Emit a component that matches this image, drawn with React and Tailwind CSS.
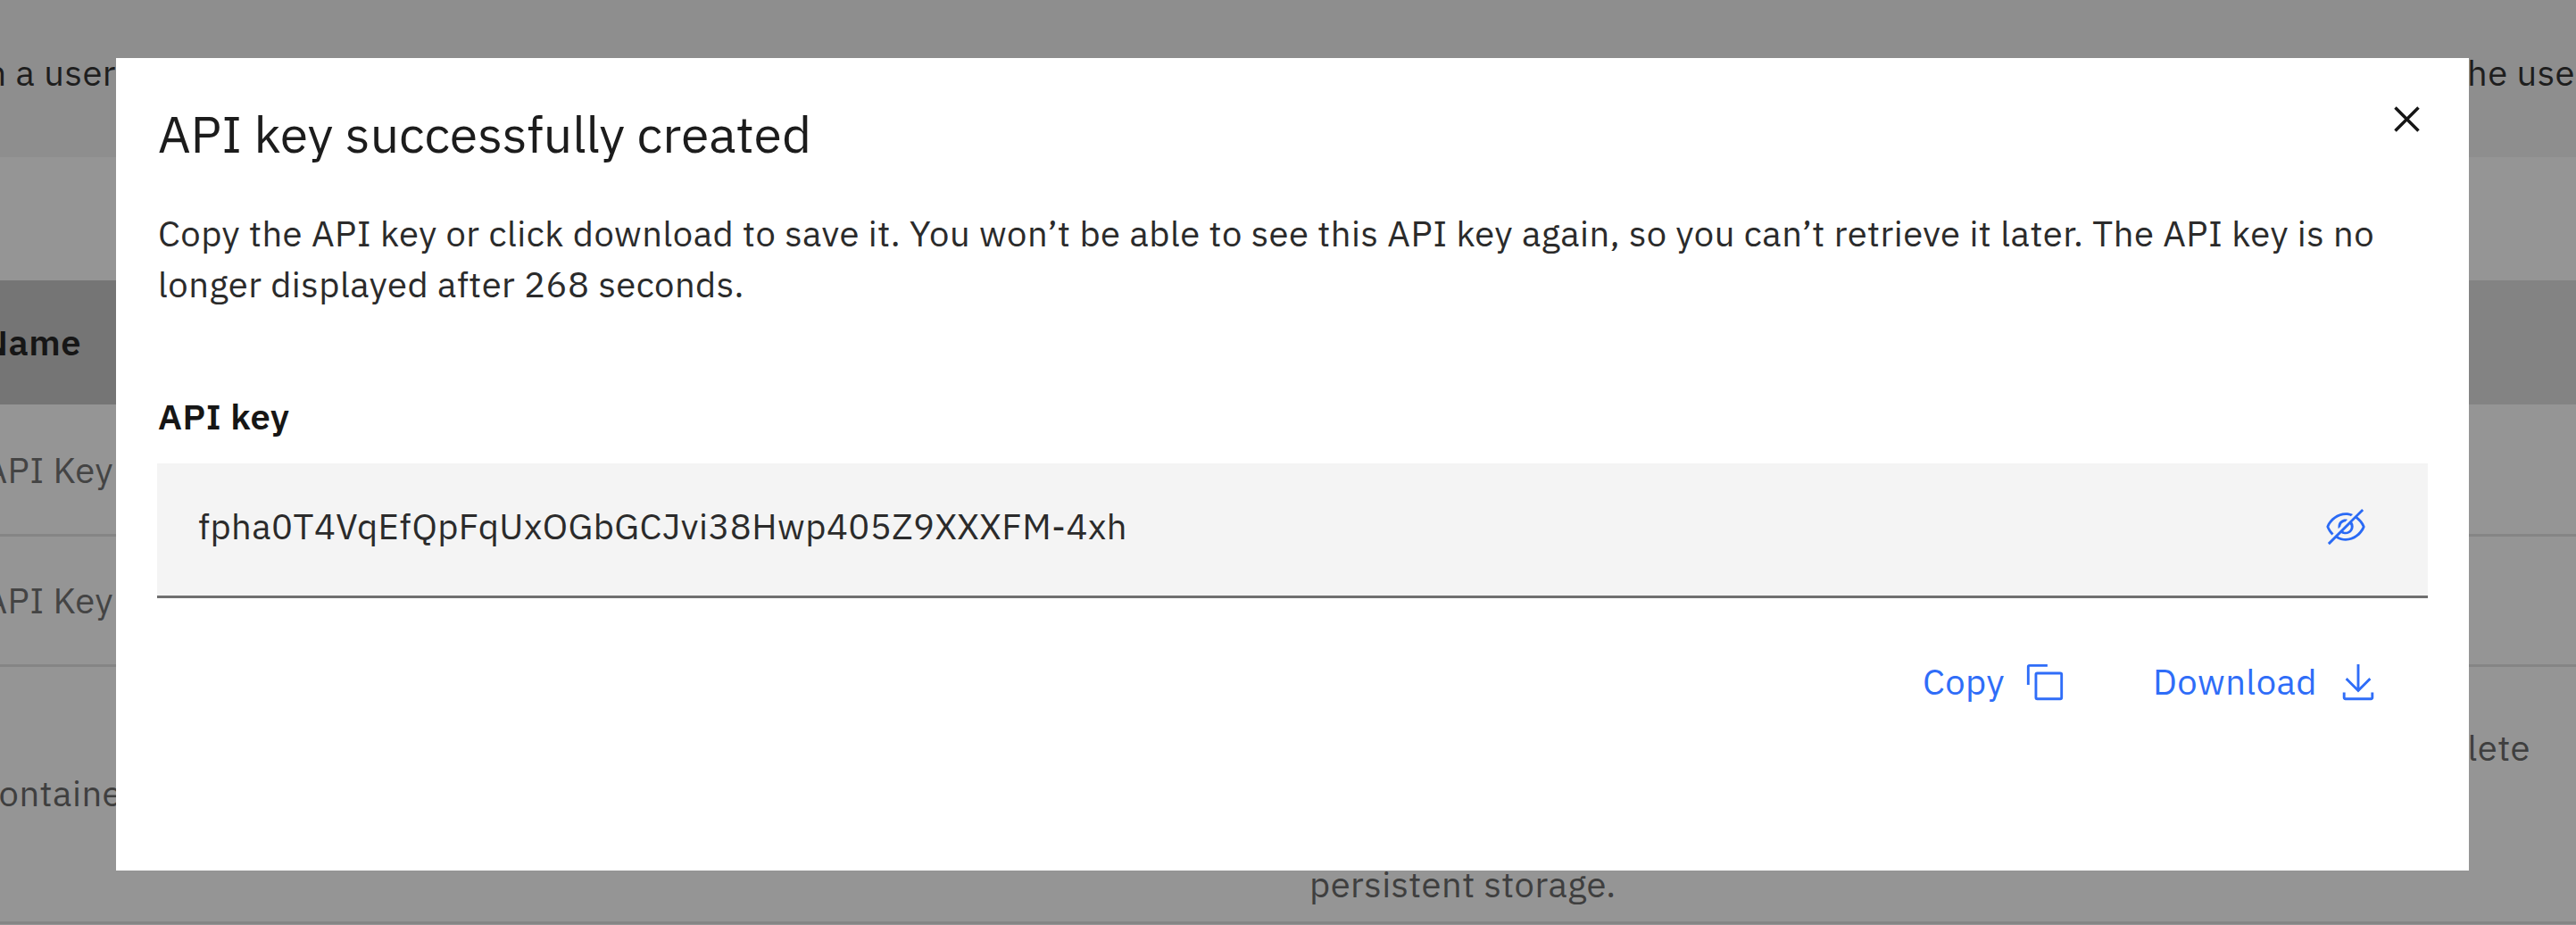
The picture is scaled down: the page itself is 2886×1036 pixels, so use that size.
const EyeOff = () => (
  <svg viewBox="0 0 16 16" fill="currentColor" className="size-[46px]">
    <path d="M2.6,11.3l0.7-0.7C2.6,9.8,1.9,9,1.5,8c1-2.5,3.8-4.5,6.5-4.5c0.7,0,1.4,0.1,2,0.4l0.8-0.8C9.9,2.7,9,2.5,8,2.5C4.7,2.6,1.7,4.7,0.5,7.8c0,0.1,0,0.2,0,0.3C1,9.3,1.7,10.4,2.6,11.3z" />
    <path d="M6,7.9c0.1-1,0.9-1.8,1.8-1.8l0.9-0.9C7.2,4.7,5.5,5.6,5.1,7.2C5,7.7,5,8.3,5.1,8.8L6,7.9z" />
    <path d="M15.5,7.8c-0.6-1.5-1.6-2.8-2.9-3.7L15,1.7L14.3,1L1,14.3L1.7,15l2.6-2.6c1.1,0.7,2.4,1,3.7,1.1c3.3-0.1,6.3-2.2,7.5-5.3C15.5,8.1,15.5,7.9,15.5,7.8z M10,8c0,1.1-0.9,2-2,2c-0.3,0-0.7-0.1-1-0.3L9.7,7C9.9,7.3,10,7.6,10,8z M8,12.5c-1,0-2.1-0.3-3-0.8l1.3-1.3c1.4,0.9,3.2,0.6,4.2-0.8c0.7-1,0.7-2.4,0-3.4l1.4-1.4c1.1,0.8,2,1.9,2.6,3.2C13.4,10.5,10.7,12.5,8,12.5z" />
  </svg>
);

const CopyIcon = () => (
  <svg viewBox="0 0 32 32" fill="currentColor" className="size-[46px]">
    <path d="M28,10V28H10V10H28m0-2H10a2,2,0,0,0-2,2V28a2,2,0,0,0,2,2H28a2,2,0,0,0,2-2V10a2,2,0,0,0-2-2Z" />
    <path d="M4,18H2V4A2,2,0,0,1,4,2H18V4H4Z" />
  </svg>
);

const DownloadIcon = () => (
  <svg viewBox="0 0 16 16" fill="currentColor" className="size-[46px]">
    <path d="M13 7L12.3 6.3 8.5 10.1 8.5 1 7.5 1 7.5 10.1 3.7 6.3 3 7 8 12z" />
    <path d="M13 12v2H3v-2H2v2c0 .6.4 1 1 1h10c.6 0 1-.4 1-1v-2H13z" />
  </svg>
);

const CloseIcon = () => (
  <svg viewBox="0 0 32 32" fill="currentColor" className="size-[57px]">
    <path d="M24 9.4L22.6 8 16 14.6 9.4 8 8 9.4 14.6 16 8 22.6 9.4 24 16 17.4 22.6 24 24 22.6 17.4 16 24 9.4z" />
  </svg>
);

function KeyRow({ height }) {
  return (
    <div className={`flex items-center border-b-3 border-[#858585] ${height}`}>
      <div className="flex w-[127px] justify-end text-[#444444]">API Key</div>
    </div>
  );
}

function Backdrop() {
  return (
    <div className="flex h-full flex-col whitespace-nowrap bg-[#959595] leading-[51px]">
      <div className="flex h-[176px] justify-between bg-[#8e8e8e] pt-[56px] text-[#1e1e1e]">
        <div className="flex w-[130px] justify-end">n a user</div>
        <div className="w-[122px]">he use</div>
      </div>
      <div className="h-[138px]" />
      <div className="flex h-[139px] items-center bg-[#838383] font-semibold text-[#161616]">
        <div className="flex h-full w-[130px] items-center justify-end bg-[#757575] pr-[39px]">Name</div>
      </div>
      <KeyRow height="h-[148px] pt-[2px]" />
      <KeyRow height="h-[146px]" />
      <div className="flex h-[288px] items-center border-b-3 border-[#858585] text-[#3f3f3f]">
        <div className="flex w-[137px] justify-end pb-[2px]">containe</div>
        <div className="flex flex-1 flex-col pl-[1330px] pt-[49px]">
          <div className="flex justify-end pr-[51px]">lete</div>
          <div className="pt-[102px]">persistent storage.</div>
        </div>
      </div>
    </div>
  );
}

function Dialog() {
  return (
    <section className="absolute top-[65px] left-[130px] flex h-[910px] w-[2636px] flex-col bg-white pr-[46px] pl-[47px] text-[#2b2b2b]">
      <header className="flex justify-between pt-[48px]">
        <h1 className="text-[57.1px] leading-[74px] tracking-[0.02px] text-[#1c1c1c]">API key successfully created</h1>
        <button className="-mt-[8px] -mr-[5px] h-[57px] text-[#161616]"><CloseIcon /></button>
      </header>
      <p className="mt-[46px] w-[2540px] leading-[57px]">
        Copy the API key or click download to save it. You won’t be able to see this API key again, so you can’t retrieve it later. The API key is no
        <br />
        longer displayed after 268 seconds.
      </p>
      <h2 className="mt-[93px] leading-[52px] font-semibold tracking-[0.6px] text-[#161616]">API key</h2>
      <div className="mt-[27px] -ml-px flex h-[151px] items-center justify-between border-b-3 border-[#6f6f6f] bg-[#f4f4f4] pr-[69px] pb-[7px] pl-[46px]">
        <span className="pb-[2px] leading-[52px]">fpha0T4VqEfQpFqUxOGbGCJvi38Hwp405Z9XXXFM-4xh</span>
        <button className="text-[#2a6af5]"><EyeOff /></button>
      </div>
      <div className="mt-[68px] flex justify-end gap-[98px] pr-[55px] leading-[52px] text-[#2f6df8]">
        <button className="flex h-[52px] items-center gap-[22px]"><span className="pb-[2px]">Copy</span><CopyIcon /></button>
        <button className="flex h-[52px] items-center gap-[23px]"><span className="pb-[2px]">Download</span><DownloadIcon /></button>
      </div>
    </section>
  );
}

export default function App() {
  return (
    <main className="relative h-[1036px] w-[2886px] overflow-hidden font-['IBM_Plex_Sans','Open_Sans',sans-serif] text-[40px] tracking-[0.46px]">
      <Backdrop />
      <Dialog />
    </main>
  );
}
